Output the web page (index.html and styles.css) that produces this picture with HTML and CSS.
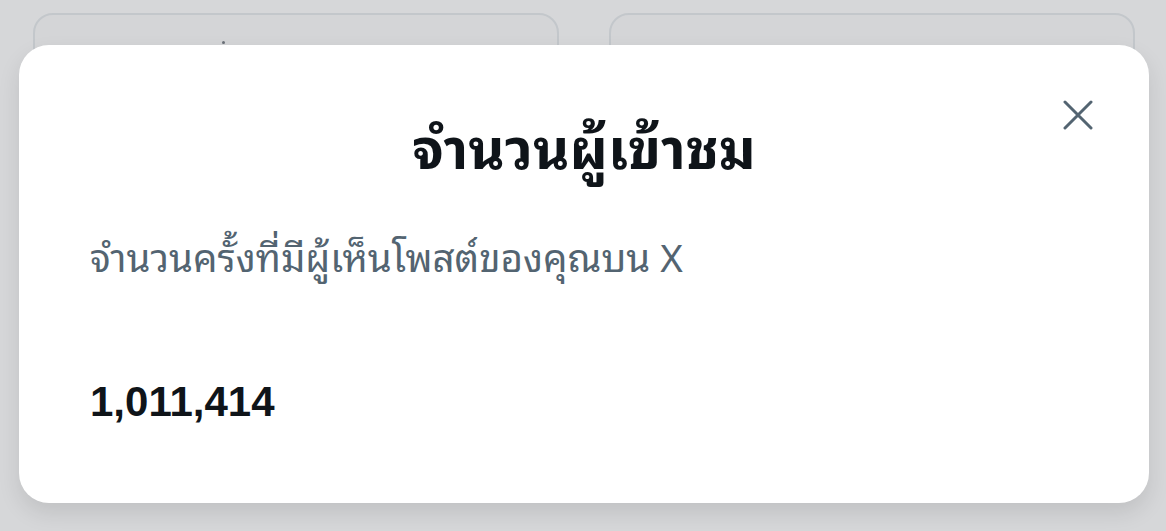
FILE: index.html
```html
<!DOCTYPE html>
<html lang="th">
<head>
    <meta charset="UTF-8">
    <meta name="viewport" content="width=device-width, initial-scale=1.0">
    <title>จำนวนผู้เข้าชม</title>
    <link rel="stylesheet" href="styles.css">
</head>
<body>
    <!-- Page behind the dialog -->
    <div class="cards">
        <div class="card"><span class="mark"></span></div>
        <div class="card"></div>
    </div>

    <!-- Views dialog -->
    <div class="dialog">
        <button class="close" aria-label="ปิด">
            <svg viewBox="0 0 30 30" width="30" height="30">
                <path d="M2 2 L28 28 M28 2 L2 28" />
            </svg>
        </button>
        <h1 class="title">จำนวนผู้เข้าชม</h1>
        <p class="subtitle">จำนวนครั้งที่มีผู้เห็นโพสต์ของคุณบน X</p>
        <p class="count">1,011,414</p>
    </div>
</body>
</html>
```

FILE: styles.css
```css
body {
    margin: 0;
    height: 531px;
    overflow: hidden;
    background: #d6d7d9;
    font-family: "Noto Sans Thai Looped", "Noto Sans Thai", "Noto Sans", "Liberation Sans", sans-serif;
    position: relative;
}

.cards {
    display: grid;
    grid-template-columns: 526px 526px;
    gap: 50px;
    padding: 13px 31px 0 33px;
}

.card {
    height: 80px;
    border: 2px solid #c3c7cb;
    border-radius: 20px;
    background: #d4d5d7;
}

.mark {
    display: block;
    width: 3px;
    height: 3px;
    margin: 26px 0 0 187px;
    border-radius: 50%;
    background: #6b7178;
}

.dialog {
    position: absolute;
    left: 19px;
    top: 45px;
    width: 1130px;
    height: 458px;
    box-sizing: border-box;
    padding: 0 71px;
    background: #ffffff;
    border-radius: 30px;
    box-shadow: 0 10px 22px rgba(0, 0, 0, 0.10);
}

.close {
    position: absolute;
    top: 55px;
    right: 56px;
    width: 30px;
    height: 30px;
    padding: 0;
    border: none;
    background: none;
}

.close svg {
    display: block;
    stroke: #536471;
    stroke-width: 3;
    stroke-linecap: round;
    fill: none;
}

.title {
    margin: 0;
    padding-top: 64px;
    text-align: center;
    font-size: 56px;
    font-weight: 700;
    line-height: 70px;
    color: #0f1419;
}

.subtitle {
    margin: 51px 0 0;
    font-size: 38.5px;
    line-height: 50px;
    color: #536471;
}

.count {
    margin: 97px 0 0;
    font-family: "Liberation Sans", Arial, sans-serif;
    font-size: 42px;
    font-weight: 700;
    line-height: 50px;
    color: #0f1419;
}
```
